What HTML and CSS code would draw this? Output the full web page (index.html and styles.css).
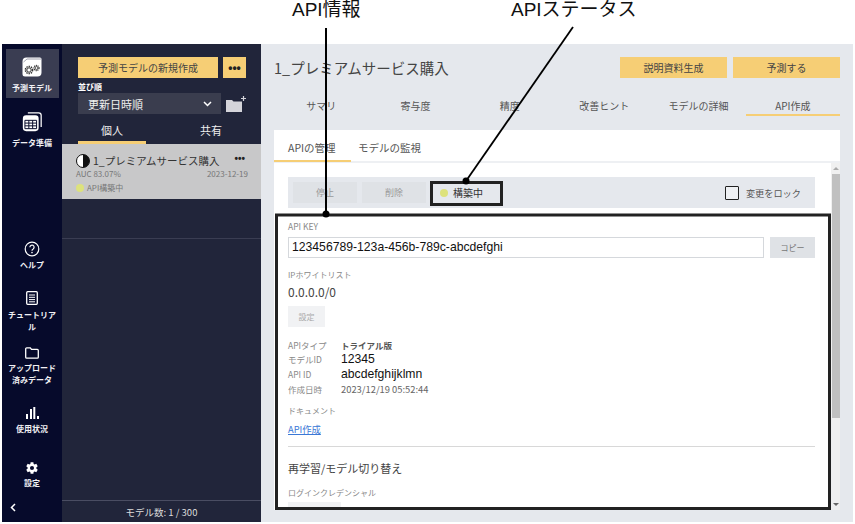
FILE: index.html
```html
<!DOCTYPE html>
<html lang="ja">
<head>
    <meta charset="UTF-8">
    <meta name="viewport" content="width=device-width, initial-scale=1.0">
    <title>API作成</title>
    <link rel="stylesheet" href="styles.css">
</head>
<body>
    <div class="callouts">
        <span class="callout-label label-info">API情報</span>
        <span class="callout-label label-status">APIステータス</span>
    </div>

    <div class="app">
        <nav class="side">
            <a class="side-item active">
                <svg width="20" height="20" viewBox="0 0 20 20"><path d="M4.500.5H18a1.500 1.500 0 0 1 1.500 1.500v13.500a4 4 0 0 1-4 4H3a2.500 2.500 0 0 1-2.500-2.500V4.500a4 4 0 0 1 4-4z" fill="#fff"/><path d="M1.500 5 5 2h14" fill="none" stroke="#8a8c9a" stroke-width=".8"/><circle cx="7" cy="13" r="3.600" fill="none" stroke="#333" stroke-width="1.500" stroke-dasharray="1.400 .9"/><circle cx="7" cy="13" r="2.200" fill="none" stroke="#333" stroke-width="1"/><circle cx="14.500" cy="11" r="2.500" fill="none" stroke="#333" stroke-width="1.300" stroke-dasharray="1.100 .7"/><circle cx="14.500" cy="11" r="1.400" fill="none" stroke="#333" stroke-width=".8"/></svg>
                <span>予測モデル</span>
            </a>
            <a class="side-item side-data">
                <svg width="20" height="20" viewBox="0 0 24 24"><path d="M7 1h13a3 3 0 0 1 3 3v14" fill="none" stroke="#fff" stroke-width="1.500"/><rect x="1" y="4" width="19" height="19" rx="4" fill="#fff"/><path d="M3.500 10h14v10h-14zM3.500 13.300h14M3.500 16.600h14M8.200 10v10M12.800 10v10" fill="none" stroke="#0a0e2c" stroke-width="1.200"/></svg>
                <span>データ準備</span>
            </a>
            <a class="side-item side-help">
                <svg width="16" height="16" viewBox="0 0 16 16"><circle cx="8" cy="8" r="6.800" fill="none" stroke="#fff" stroke-width="1.200"/><path d="M5.900 6.200a2.100 2.100 0 1 1 3.300 1.700c-.8.500-1.200.9-1.200 1.800" fill="none" stroke="#fff" stroke-width="1.200"/><circle cx="8" cy="11.600" r=".8" fill="#fff"/></svg>
                <span>ヘルプ</span>
            </a>
            <a class="side-item side-tutorial">
                <svg width="12" height="14" viewBox="0 0 12 14"><rect x=".7" y=".7" width="10.600" height="12.600" rx="1" fill="none" stroke="#fff" stroke-width="1.300"/><path d="M3 4h6M3 6.300h6M3 8.600h6M3 10.800h6" stroke="#fff" stroke-width="1"/></svg>
                <span>チュートリアル</span>
            </a>
            <a class="side-item side-upload">
                <svg width="14" height="12" viewBox="0 0 14 12"><path d="M1.700.8h3.600l1.200 1.600h5.800a1 1 0 0 1 1 1v6.800a1 1 0 0 1-1 1H1.700a1 1 0 0 1-1-1V1.800a1 1 0 0 1 1-1z" fill="none" stroke="#fff" stroke-width="1.300"/></svg>
                <span>アップロード<br>済みデータ</span>
            </a>
            <a class="side-item side-usage">
                <svg width="14" height="12" viewBox="0 0 14 12"><path d="M1 7h2v5H1zM5 2h2v10H5zM8.300 0h2v12h-2zM12 9h2v3h-2z" fill="#fff"/></svg>
                <span>使用状況</span>
            </a>
            <a class="side-item side-settings">
                <svg width="14" height="14" viewBox="0 0 24 24"><path fill="#fff" d="M19.400 13a7.500 7.500 0 0 0 0-2l2.400-1.900-2.400-4.200-2.900 1.200a7.500 7.500 0 0 0-1.700-1L14.400 2H9.600l-.4 3.100a7.500 7.500 0 0 0-1.700 1L4.600 4.900 2.200 9.100 4.600 11a7.500 7.500 0 0 0 0 2l-2.400 1.900 2.400 4.200 2.900-1.200a7.500 7.500 0 0 0 1.700 1l.4 3.100h4.800l.4-3.100a7.500 7.500 0 0 0 1.700-1l2.900 1.200 2.400-4.200zM12 15.500a3.500 3.500 0 1 1 0-7 3.500 3.500 0 0 1 0 7z"/></svg>
                <span>設定</span>
            </a>
            <a class="side-collapse">
                <svg width="6" height="9" viewBox="0 0 6 9"><path d="M5 1 1.500 4.500 5 8" fill="none" stroke="#fff" stroke-width="1.500"/></svg>
            </a>
        </nav>

        <aside class="models">
            <div class="models-actions">
                <button class="btn-gold btn-new">予測モデルの新規作成</button>
                <button class="btn-gold btn-more">•••</button>
            </div>
            <div class="sort-label">並び順</div>
            <div class="sort-row">
                <div class="sort-select">
                    <span>更新日時順</span>
                    <svg width="9" height="6" viewBox="0 0 9 6"><path d="M1 1l3.500 3.500L8 1" fill="none" stroke="#fff" stroke-width="1.500"/></svg>
                </div>
                <svg width="20" height="17" viewBox="0 0 20 17"><path d="M0 5h6l1.500 1.500H16V17H0z" fill="#d4d4da"/><path d="M15 3.500h5M17.500 1v5" stroke="#d4d4da" stroke-width="1.200"/></svg>
            </div>
            <div class="models-tabs">
                <span class="models-tab active">個人</span>
                <span class="models-tab">共有</span>
            </div>
            <div class="model-card">
                <div class="model-title">
                    <span class="half-circle"></span>
                    <span class="model-name">1_プレミアムサービス購入</span>
                    <span class="model-more">•••</span>
                </div>
                <div class="model-meta">
                    <span>AUC 83.07%</span>
                    <span>2023-12-19</span>
                </div>
                <div class="model-status"><span class="dot"></span>API構築中</div>
            </div>
            <div class="models-rule"></div>
            <div class="models-count">モデル数: 1 / 300</div>
        </aside>

        <main class="main">
            <header class="main-head">
                <h1>1_プレミアムサービス購入</h1>
                <div class="main-buttons">
                    <button class="btn-gold btn-wide">説明資料生成</button>
                    <button class="btn-gold btn-wide">予測する</button>
                </div>
            </header>
            <div class="main-tabs">
                <span class="main-tab">サマリ</span>
                <span class="main-tab">寄与度</span>
                <span class="main-tab">精度</span>
                <span class="main-tab">改善ヒント</span>
                <span class="main-tab">モデルの詳細</span>
                <span class="main-tab active">API作成</span>
            </div>

            <section class="card">
                <div class="sub-tabs">
                    <span class="sub-tab active">APIの管理</span>
                    <span class="sub-tab">モデルの監視</span>
                </div>
                <div class="card-body">
                    <div class="content">
                        <div class="toolbar">
                            <button class="btn-gray btn-tool">停止</button>
                            <button class="btn-gray btn-tool">削除</button>
                            <div class="status-box"><span class="dot"></span>構築中</div>
                            <label class="lock"><span class="checkbox"></span>変更をロック</label>
                        </div>

                        <div class="label label-key">API KEY</div>
                        <div class="key-row">
                            <div class="key-input">123456789-123a-456b-789c-abcdefghi</div>
                            <button class="btn-gray btn-copy">コピー</button>
                        </div>

                        <div class="label label-ip">IPホワイトリスト</div>
                        <div class="ip-value">0.0.0.0/0</div>
                        <button class="btn-light btn-set">設定</button>

                        <dl class="info">
                            <dt>APIタイプ</dt><dd class="info-type">トライアル版</dd>
                            <dt>モデルID</dt><dd class="info-plain">12345</dd>
                            <dt>API ID</dt><dd class="info-plain">abcdefghijklmn</dd>
                            <dt>作成日時</dt><dd>2023/12/19 05:52:44</dd>
                        </dl>

                        <div class="label label-doc">ドキュメント</div>
                        <a class="doc-link">API作成</a>
                        <hr class="rule">
                        <h2>再学習/モデル切り替え</h2>
                        <div class="label">ログインクレデンシャル</div>
                        <button class="btn-light btn-login"></button>
                    </div>
                    <div class="scrollbar">
                        <span class="scroll-arrow"></span>
                        <span class="scroll-thumb"></span>
                        <span class="scroll-arrow down"></span>
                    </div>
                </div>
            </section>
        </main>
    </div>

    <svg class="overlay" width="855" height="524" viewBox="0 0 855 524">
        <rect x="276.500" y="215" width="553" height="293.500" fill="none" stroke="#222" stroke-width="3"/>
        <rect x="431.500" y="182.500" width="70" height="22" fill="none" stroke="#222" stroke-width="3"/>
        <path d="M326 28V214" stroke="#000" stroke-width="2"/>
        <circle cx="326" cy="214" r="3.500" fill="#000"/>
        <path d="M573 27 466 181" stroke="#000" stroke-width="1.800"/>
        <circle cx="466" cy="181" r="3.500" fill="#000"/>
    </svg>
</body>
</html>
```

FILE: styles.css
```css
* {
    box-sizing: border-box;
}
html, body {
    margin: 0;
    height: 524px;
    overflow: hidden;
    background: #fff;
}
body {
    position: relative;
    font-family: "Noto Sans CJK JP", "Noto Sans", sans-serif;
    font-size: 10px;
    color: #444;
    padding: 44px 2px 2px 2px;
}
button {
    border: none;
    font-family: inherit;
    padding: 0;
}

/* annotations on top of the screenshot */
.callout-label {
    position: absolute;
    top: 0;
    font-family: "Liberation Sans", "Noto Sans CJK JP", sans-serif;
    font-size: 19px;
    line-height: 20px;
    color: #111;
}
.label-info {
    left: 292px;
}
.label-status {
    left: 511px;
}
.overlay {
    position: absolute;
    left: 0;
    top: 0;
    pointer-events: none;
}

.app {
    display: flex;
    height: 478px;
}

/* left icon bar */
.side {
    width: 60px;
    flex: none;
    background: #060a2b;
    color: #fff;
    display: flex;
    flex-direction: column;
    align-items: center;
    padding: 5px 3px 0;
}
.side-item {
    width: 53px;
    text-align: center;
    font-size: 8px;
    line-height: 12px;
    font-weight: 700;
    display: flex;
    flex-direction: column;
    align-items: center;
    gap: 3px;
    color: #f0f0f4;
}
.side-item svg {
    flex: none;
}
.side-item.active {
    background: #3a3d52;
    height: 49px;
    padding-top: 8px;
    gap: 5px;
    margin-bottom: 14px;
}
.side-data {
    gap: 5px;
}
.side-help {
    margin-top: 92px;
    height: 50px;
    gap: 2px;
}
.side-tutorial {
    height: 56px;
    gap: 4px;
}
.side-upload {
    height: 60px;
}
.side-usage {
    height: 54px;
    gap: 4px;
}
.side-settings {
    gap: 2px;
}
.side-collapse {
    margin-top: auto;
    align-self: flex-start;
    padding: 0 0 7px 5px;
}

/* model list */
.models {
    width: 199px;
    flex: none;
    background: #21253a;
    color: #fff;
    display: flex;
    flex-direction: column;
}
.btn-gold {
    background: #f6ce75;
    color: #444;
    font-size: 10px;
    height: 21px;
}
.models-actions {
    display: flex;
    gap: 5px;
    padding: 13px 0 0 16px;
}
.btn-new {
    width: 140px;
}
.btn-more {
    width: 23px;
    font-family: "Liberation Sans", sans-serif;
    font-size: 12px;
    font-weight: 700;
    color: #222;
}
.sort-label {
    font-size: 8px;
    line-height: 12px;
    font-weight: 700;
    padding: 3px 0 0 16px;
}
.sort-row {
    display: flex;
    align-items: center;
    gap: 5px;
    padding-left: 16px;
}
.sort-select {
    width: 143px;
    height: 21px;
    background: #3a3d4e;
    display: flex;
    align-items: center;
    justify-content: space-between;
    padding: 0 9px 0 10px;
    font-size: 11px;
    color: #f0f0f0;
}
.models-tabs {
    display: flex;
    margin: 3px 0 0 16px;
    height: 27px;
    font-size: 11px;
}
.models-tab {
    width: 68px;
    text-align: center;
    line-height: 27px;
    color: #eee;
}
.models-tab + .models-tab {
    width: auto;
    padding-left: 54px;
}
.models-tab.active {
    border-bottom: 3px solid #f6ce75;
}
.model-card {
    height: 55px;
    background: #c8c8c9;
    color: #333;
    padding: 8px 13px 0 14px;
}
.model-title {
    display: flex;
    align-items: center;
    height: 17px;
}
.half-circle {
    width: 14px;
    height: 14px;
    border-radius: 50%;
    border: 1.500px solid #111;
    background: linear-gradient(90deg, #fff 50%, #111 50%);
    flex: none;
}
.model-name {
    font-size: 10.500px;
    margin-left: 3px;
    flex: 1;
    color: #333;
    white-space: nowrap;
}
.model-more {
    font-family: "Liberation Sans", sans-serif;
    font-size: 10px;
    font-weight: 700;
    color: #222;
    padding-right: 3px;
    margin-top: -4px;
}
.model-meta {
    display: flex;
    justify-content: space-between;
    font-size: 8px;
    line-height: 12px;
    margin-top: -1px;
    color: #777;
}
.model-status {
    display: flex;
    align-items: center;
    gap: 3px;
    font-size: 8px;
    line-height: 13px;
    color: #777;
    margin-top: 1px;
}
.dot {
    width: 8px;
    height: 8px;
    border-radius: 50%;
    background: #dde27c;
    flex: none;
}
.models-rule {
    height: 1px;
    background: #3a3d52;
    margin-top: 39px;
}
.models-count {
    margin-top: auto;
    height: 22px;
    border-top: 1px solid #4a4d62;
    text-align: center;
    font-size: 9.500px;
    line-height: 22px;
    color: #ddd;
}

/* main area */
.main {
    flex: 1;
    background: #e5e8ed;
    padding: 0 13px;
    display: flex;
    flex-direction: column;
    min-width: 0;
}
.main-head {
    display: flex;
    justify-content: space-between;
    align-items: center;
    padding-top: 13px;
    height: 34px;
}
h1 {
    margin: 0;
    font-size: 14.500px;
    font-weight: 400;
    color: #444;
}
.main-buttons {
    display: flex;
    gap: 6px;
}
.btn-wide {
    width: 107px;
}
.main-tabs {
    display: flex;
    height: 19px;
    margin-top: 19px;
}
.main-tab {
    flex: 1;
    text-align: center;
    font-size: 10px;
    line-height: 17px;
    color: #555;
}
.main-tab.active {
    border-bottom: 2px solid #f6ce75;
}
.card {
    margin-top: 14px;
    height: 380px;
    flex: none;
    background: #fff;
    display: flex;
    flex-direction: column;
}
.sub-tabs {
    height: 33px;
    display: flex;
    border-bottom: 2px solid #eef0f3;
    flex: none;
}
.sub-tab {
    font-size: 10.500px;
    line-height: 36px;
    color: #555;
    padding: 0 7px;
}
.sub-tab.active {
    width: 77px;
    padding-left: 14px;
    height: 32px;
    border-bottom: 2px solid #f6ce75;
    white-space: nowrap;
}
.card-body {
    flex: 1;
    min-height: 0;
    display: flex;
    overflow: hidden;
}
.content {
    width: 556px;
    padding: 14px 15px 0 14px;
    flex: none;
}
.toolbar {
    height: 31px;
    background: #e5e8ed;
    display: flex;
    align-items: center;
    gap: 5px;
    padding: 0 14px 0 5px;
}
.btn-gray {
    background: #dfe2e6;
    color: #999;
    font-size: 9px;
}
.btn-tool {
    width: 64px;
    height: 21px;
}
.status-box {
    display: flex;
    align-items: center;
    gap: 5px;
    margin-left: 5px;
    padding-left: 4px;
    color: #333;
    font-size: 10px;
}
.lock {
    margin-left: auto;
    display: flex;
    align-items: center;
    gap: 7px;
    font-size: 9.200px;
    color: #555;
}
.checkbox {
    width: 14px;
    height: 14px;
    border: 1.500px solid #222;
    border-radius: 1px;
    background: #eef0f3;
}
.label {
    font-size: 8px;
    line-height: 12px;
    color: #888;
}
.label-key {
    font-size: 8.500px;
    margin-top: 12px;
}
.key-row {
    display: flex;
    gap: 6px;
    margin-top: 5px;
}
.key-input {
    flex: 1;
    height: 21px;
    border: 1px solid #d5d8dc;
    font-family: "Liberation Sans", sans-serif;
    font-size: 12.200px;
    line-height: 19px;
    padding-left: 3px;
    color: #111;
}
.btn-copy {
    width: 45px;
    height: 21px;
    font-size: 8px;
    color: #777;
}
.label-ip {
    margin-top: 11px;
}
.ip-value {
    font-size: 12px;
    line-height: 16px;
    margin-top: 3px;
    color: #444;
}
.btn-light {
    display: block;
    background: #f1f2f4;
    color: #aaa;
    font-size: 8px;
}
.btn-set {
    width: 37px;
    height: 21px;
    margin-top: 6px;
}
.info {
    display: grid;
    grid-template-columns: 53px 1fr;
    grid-auto-rows: 14.600px;
    margin: 11px 0 0;
    font-size: 8.500px;
    line-height: 15px;
    align-items: center;
}
.info dt {
    color: #888;
}
.info dd {
    margin: 0;
    font-size: 9.400px;
    color: #666;
}
.info .info-type {
    font-size: 8.500px;
    font-weight: 700;
    color: #555;
}
.info .info-plain {
    font-family: "Liberation Sans", sans-serif;
    font-size: 12.200px;
    color: #111;
}
.label-doc {
    margin-top: 9px;
}
.doc-link {
    display: block;
    margin-top: 6px;
    font-size: 9.300px;
    line-height: 13px;
    color: #3b78d6;
    text-decoration: underline;
}
.rule {
    border: none;
    height: 1px;
    background: #d8d8d8;
    margin: 10px 0 0;
}
h2 {
    margin: 13px 0 0;
    font-size: 11px;
    line-height: 16px;
    font-weight: 400;
    color: #444;
}
h2 + .label {
    margin-top: 11px;
}
.btn-login {
    width: 53px;
    height: 21px;
    margin-top: 3px;
}
.scrollbar {
    width: 9px;
    margin-left: 1px;
    flex: none;
    background: #f0f0f0;
    display: flex;
    flex-direction: column;
    align-items: center;
}
.scroll-arrow {
    width: 0;
    height: 0;
    margin: 4px 0;
    border-left: 3px solid transparent;
    border-right: 3px solid transparent;
    border-bottom: 3px solid #aaa;
}
.scroll-arrow.down {
    margin-top: auto;
    border-bottom: none;
    border-top: 3px solid #666;
}
.scroll-thumb {
    width: 8px;
    height: 244px;
    background: #c0c0c0;
}
```
